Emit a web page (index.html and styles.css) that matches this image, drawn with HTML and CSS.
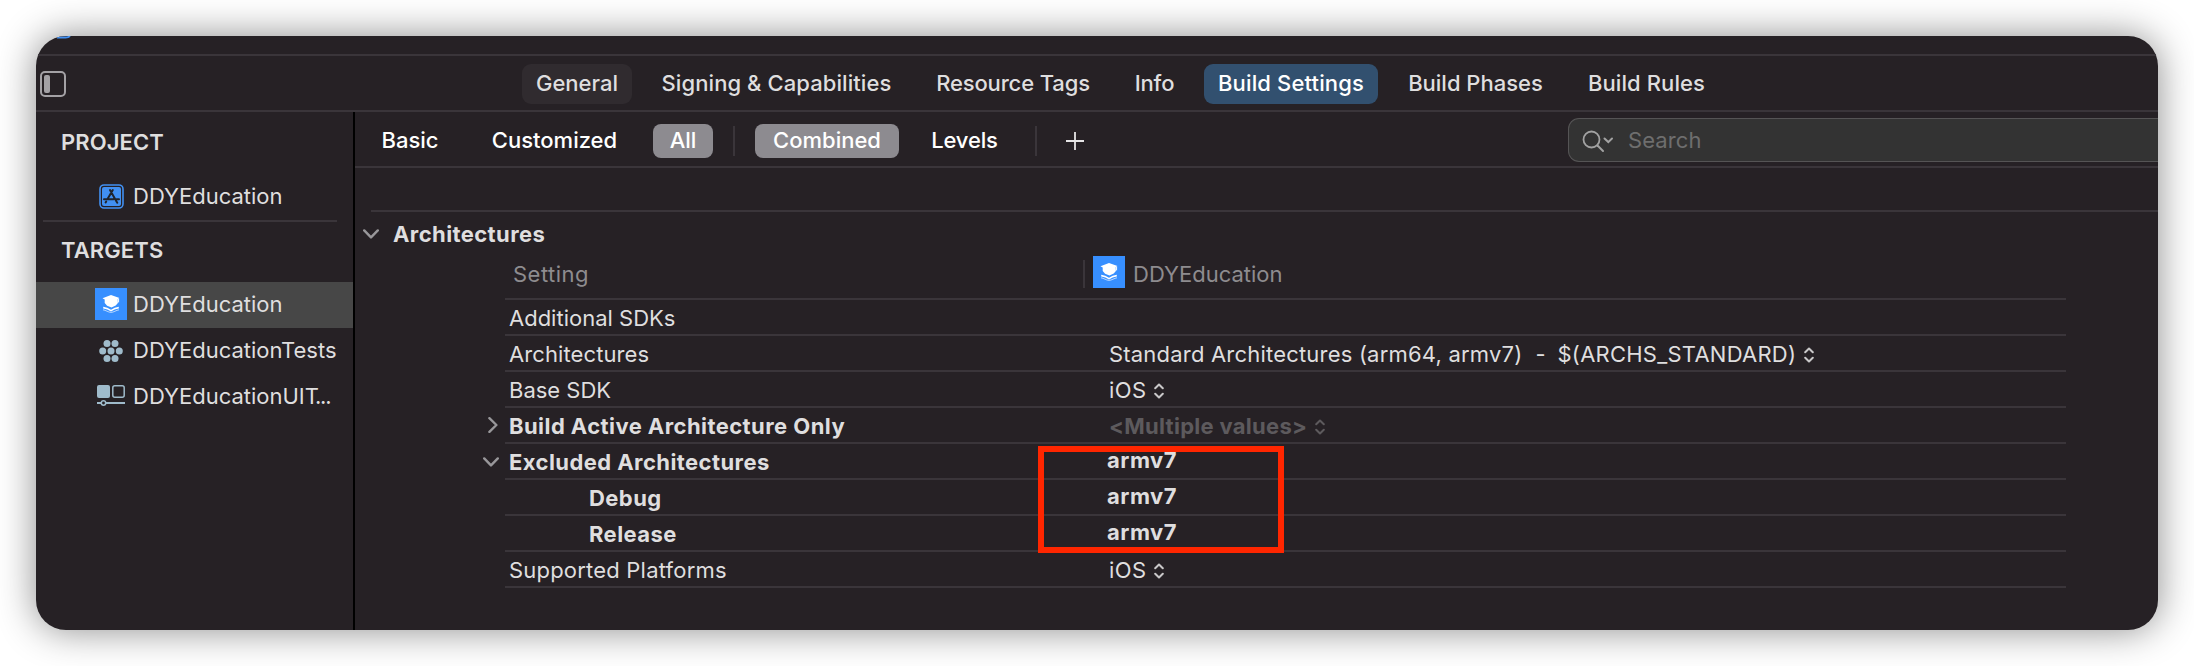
FILE: index.html
```html
<!DOCTYPE html>
<html lang="en">
<head>
<meta charset="utf-8">
<title>DDYEducation – Build Settings</title>
<link rel="stylesheet" href="styles.css">
</head>
<body>
<svg class="defs" width="0" height="0" aria-hidden="true">
  <symbol id="app" viewBox="0 0 32 32">
    <rect width="32" height="32" fill="#378fff"/>
    <path d="M7.500 10.200 16 7l8.500 3-1.800 1.200.2 3.800-2.200 2.600-4.200 1.900-4.400-1.700-2.400-2.800v-3.600z" fill="#fff"/>
    <path d="M23.600 11v3.400" stroke="#fff" stroke-width="1"/>
    <path d="M8.200 18.800q4.300.6 7.800 2.900 3.500-2.300 7.800-2.900v1.600q-4.300.6-7.800 3-3.500-2.400-7.800-3z" fill="#fff"/>
    <path d="M8 21.800c2.500.3 5.500 2.600 8 2.600s5.500-2.300 8-2.600" fill="none" stroke="#fff" stroke-width=".8" opacity=".8"/>
  </symbol>
  <symbol id="stepper" viewBox="0 0 10 16">
    <path d="M1.200 5.300 5 1.500l3.800 3.800M1.200 10.700 5 14.500l3.800-3.800" fill="none" stroke="currentColor" stroke-width="2" stroke-linecap="round" stroke-linejoin="round"/>
  </symbol>
  <symbol id="down" viewBox="0 0 16 10">
    <path d="M1.200 1.400 8 8.400l6.800-7" fill="none" stroke="#98979a" stroke-width="2.400" stroke-linecap="round" stroke-linejoin="round"/>
  </symbol>
  <symbol id="right" viewBox="0 0 10 16">
    <path d="M1.400 1.200 8.400 8l-7 6.800" fill="none" stroke="#98979a" stroke-width="2.400" stroke-linecap="round" stroke-linejoin="round"/>
  </symbol>
</svg>

<div class="window">
  <div class="strip"><svg class="clipped-icon" width="16" height="3" viewBox="0 0 16 3"><path d="M1 1.500h8.500q3 0 4.500-1.500" fill="none" stroke="#418ff0" stroke-width="2"/></svg></div>

  <header class="tabbar">
    <svg class="nav-toggle" width="26" height="26" viewBox="0 0 26 26"><rect x="1" y="1" width="24" height="24" rx="4" fill="none" stroke="#a3a1a5" stroke-width="2"/><rect x="4" y="4" width="6" height="18" rx="2" fill="#a3a1a5"/></svg>
    <nav class="tabs">
      <a class="tab tab-general">General</a>
      <a class="tab tab-signing">Signing &amp; Capabilities</a>
      <a class="tab tab-tags">Resource Tags</a>
      <a class="tab tab-info">Info</a>
      <a class="tab tab-settings">Build Settings</a>
      <a class="tab tab-phases">Build Phases</a>
      <a class="tab tab-rules">Build Rules</a>
    </nav>
  </header>

  <div class="body">
    <aside class="sidebar">
      <h2 class="group">PROJECT</h2>
      <div class="project">
        <span class="icon"><svg width="25" height="25" viewBox="0 0 25 25"><rect x="1" y="1" width="23" height="23" rx="4" fill="none" stroke="#4190f2" stroke-width="1.600"/><rect x="3" y="3" width="19" height="19" rx="2" fill="#4190f2"/><path d="M11 6l6.500 11.500M13.800 6 8.400 15.200M5 15.200h9.500M17.500 15.200H20M7.200 17.500l-.6 1M17.500 17.500l.8 1.200" fill="none" stroke="#20242c" stroke-width="2" stroke-linecap="round"/></svg></span>
        <span>DDYEducation</span>
      </div>
      <div class="rule"></div>
      <h2 class="group">TARGETS</h2>
      <ul class="targets">
        <li class="target selected"><span class="icon"><svg width="32" height="32"><use href="#app"/></svg></span><span>DDYEducation</span></li>
        <li class="target"><span class="icon"><svg width="24" height="22" viewBox="0 0 24 22" fill="#9fbbcb"><circle cx="8" cy="3.600" r="3.500"/><circle cx="16" cy="3.600" r="3.500"/><circle cx="3.700" cy="11" r="3.500"/><circle cx="12" cy="11" r="3.500"/><circle cx="20.300" cy="11" r="3.500"/><circle cx="8" cy="18.400" r="3.500"/><circle cx="16" cy="18.400" r="3.500"/></svg></span><span>DDYEducationTests</span></li>
        <li class="target"><span class="icon"><svg class="ui-icon" width="28" height="21" viewBox="0 0 28 21"><rect width="13" height="13" rx="2" fill="#9fbbcb"/><rect x="15.800" y=".8" width="11.400" height="11.400" rx="2" fill="none" stroke="#9fbbcb" stroke-width="1.500"/><path d="M0 18h4M9 18h19" stroke="#9fbbcb" stroke-width="1.800"/><circle cx="6.500" cy="18" r="2.200" fill="none" stroke="#9fbbcb" stroke-width="1.500"/></svg></span><span>DDYEducationUIT<span class="dots">...</span></span></li>
      </ul>
    </aside>

    <main class="main">
      <div class="filterbar">
        <a class="filter f-basic">Basic</a>
        <a class="filter f-custom">Customized</a>
        <a class="filter f-all on">All</a>
        <i class="sep"></i>
        <a class="filter f-combined on">Combined</a>
        <a class="filter f-levels">Levels</a>
        <i class="sep sep-end"></i>
        <svg class="plus" width="18" height="18" viewBox="0 0 18 18"><path d="M9 0v18M0 9h18" stroke="#e6e5e6" stroke-width="1.800"/></svg>
        <div class="search">
          <svg width="32" height="24" viewBox="0 0 32 24" fill="none" stroke="#a2a2a2" stroke-linecap="round"><circle cx="9.500" cy="9.500" r="8" stroke-width="1.800"/><path d="M15.500 15.500l5.500 5.500" stroke-width="2"/><path d="M22.500 8.500l3.800 3.600 3.700-3.600" stroke-width="2"/></svg>
          <span>Search</span>
        </div>
      </div>

      <section class="settings">
        <div class="section-title"><svg width="16" height="10"><use href="#down"/></svg><h3>Architectures</h3></div>
        <div class="table">
          <div class="thead"><span class="th-name">Setting</span><div class="th-target"><svg width="32" height="32"><use href="#app"/></svg><span>DDYEducation</span></div></div>
          <div class="row"><span class="name">Additional SDKs</span></div>
          <div class="row"><span class="name name-arch">Architectures</span><span class="value"><span class="standard">Standard Architectures (arm64, armv7)</span><span class="dash">-</span><span class="archs">$(ARCHS_STANDARD)</span><svg class="stepper" width="10" height="16"><use href="#stepper"/></svg></span></div>
          <div class="row"><span class="name">Base SDK</span><span class="value value-ios">iOS<svg class="stepper" width="10" height="16"><use href="#stepper"/></svg></span></div>
          <div class="row bold"><svg class="disclosure d-right" width="10" height="16"><use href="#right"/></svg><span class="name">Build Active Architecture Only</span><span class="value multiple">&lt;Multiple values&gt;<svg class="stepper" width="10" height="16"><use href="#stepper"/></svg></span></div>
          <div class="row bold"><svg class="disclosure d-down" width="16" height="10"><use href="#down"/></svg><span class="name">Excluded Architectures</span><span class="value edited">armv7</span></div>
          <div class="row bold"><span class="name child">Debug</span><span class="value edited">armv7</span></div>
          <div class="row bold"><span class="name child">Release</span><span class="value edited">armv7</span></div>
          <div class="row"><span class="name name-wide">Supported Platforms</span><span class="value value-ios">iOS<svg class="stepper" width="10" height="16"><use href="#stepper"/></svg></span></div>
          <div class="highlight"></div>
        </div>
      </section>
    </main>
  </div>
</div>
</body>
</html>
```

FILE: styles.css
```css
* { box-sizing: border-box; }

body {
  margin: 0;
  padding: 36px;
  height: 666px;
  overflow: hidden;
  background: #fff;
  color: #dfdedf;
  font: 400 22px/36px Inter, "Liberation Sans", sans-serif;
  white-space: nowrap;
}

svg { display: block; flex: none; }
.defs { position: absolute; }
h2, h3, ul { margin: 0; padding: 0; font-size: inherit; list-style: none; }

.window {
  height: 594px;
  display: flex;
  flex-direction: column;
  background: #262125;
  border-radius: 30px;
  overflow: hidden;
  box-shadow: 0 0 38px rgba(0, 0, 0, .46);
}

.strip { height: 20px; flex: none; border-bottom: 2px solid #3a353a; }
.clipped-icon { margin-left: 20px; }

/* Editor tabs */
.tabbar {
  height: 56px;
  flex: none;
  display: flex;
  align-items: flex-start;
  padding: 8px 0 0 4px;
  border-bottom: 2px solid #3a353a;
}
.nav-toggle { margin-top: 7px; }
.tabs { display: flex; gap: 16px; margin-left: 456px; font-weight: 500; }
.tab { height: 40px; line-height: 38px; border-radius: 9px; text-align: center; }
.tab-general { width: 110px; background: #302b2f; }
.tab-signing { width: 257px; letter-spacing: .08px; }
.tab-tags { width: 184px; letter-spacing: -.14px; }
.tab-info { width: 67px; letter-spacing: -.16px; }
.tab-settings { width: 174px; background: #32506f; color: #fff; letter-spacing: .14px; }
.tab-phases { width: 163px; }
.tab-rules { width: 147px; letter-spacing: .08px; }

.body { flex: 1; display: flex; min-height: 0; }

/* Project navigator */
.sidebar { width: 319px; flex: none; padding-top: 12px; border-right: 2px solid #000; }
.group { padding-left: 25px; font-weight: 600; letter-spacing: .1px; }
.project { height: 36px; display: flex; margin-top: 18px; padding-left: 59px; gap: 6px; }
.icon { width: 32px; display: flex; align-items: center; justify-content: center; }
.project .icon { height: 37px; }
.rule { height: 2px; margin: 6px 16px 10px 7px; background: #3a353a; }
.targets { margin-top: 14px; }
.target { height: 46px; padding-left: 59px; display: flex; gap: 6px; line-height: 44px; }
.target .icon { height: 44px; }
.target:nth-child(2) .icon { height: 45px; }
.selected { background: #474747; }
.ui-icon { margin-top: -1px; }
.dots { letter-spacing: -1.2px; margin-left: -4px; }

/* Filter bar */
.main { flex: 1; min-width: 0; }
.filterbar {
  height: 56px;
  display: flex;
  align-items: flex-start;
  padding: 12px 0 0 13px;
  border-bottom: 2px solid #3a353a;
  color: #fff;
  font-weight: 500;
}
.filter { height: 34px; line-height: 32px; border-radius: 8px; text-align: center; }
.on { background: #8d8b90; }
.f-basic { width: 84px; }
.f-custom { width: 151px; margin: 0 -1px 0 27px; }
.f-all { width: 60px; margin-left: 24px; }
.f-combined { width: 144px; margin-left: 20px; }
.f-levels { width: 93px; margin-left: 19px; letter-spacing: -.13px; }
.sep { width: 2px; height: 30px; margin: 2px 0 0 20px; background: #3a353a; }
.sep-end { margin-left: 24px; }
.plus { margin: 8px 0 0 29px; }
.search {
  flex: 1;
  height: 44px;
  margin: -6px 0 0 484px;
  padding: 0 0 0 13px;
  display: flex;
  gap: 14px;
  line-height: 42px;
  font-weight: 400;
  letter-spacing: .1px;
  color: #6e6e6e;
  background: #333;
  border: 1px solid #555455;
  border-right: 0;
  border-radius: 11px 0 0 11px;
}
.search svg { margin-top: 11px; }

/* Build settings table */
.settings { margin: 42px 0 0 16px; border-top: 2px solid #3a353a; }
.section-title { display: flex; align-items: center; height: 40px; margin: 2px 0 1px -8px; gap: 14px; }
.section-title h3 { font-weight: 700; letter-spacing: .41px; }
.table { position: relative; width: 1561px; margin-left: 134px; }
.thead {
  height: 45px;
  display: grid;
  grid-template-columns: 578px 1fr;
  color: #8e8c8f;
  border-bottom: 2px solid #3a353a;
}
.th-name { padding-left: 8px; line-height: 38px; letter-spacing: .48px; }
.th-target { display: flex; gap: 8px; line-height: 38px; padding-left: 10px; background: linear-gradient(#3a353a, #3a353a) 0 5px / 2px 28px no-repeat; }
.th-target svg { margin-top: 1px; }
.row {
  position: relative;
  height: 36px;
  display: grid;
  grid-template-columns: 604px 1fr;
  box-shadow: inset 0 -2px #3a353a;
}
.name { padding-left: 4px; grid-column: 1; }
.name-arch { letter-spacing: .1px; }
.name-wide { letter-spacing: .2px; }
.bold { font-weight: 700; letter-spacing: .43px; }
.child { padding-left: 84px; }
.value { display: flex; align-items: center; grid-column: 2; }
.stepper { margin: 1px 0 0 8px; color: #c9c8c9; }
.value-ios { letter-spacing: .4px; }
.standard { letter-spacing: .2px; }
.dash { margin: 0 12px 0 13px; }
.archs { letter-spacing: .24px; }
.multiple { color: #5d5a5d; letter-spacing: .29px; }
.multiple .stepper { color: #5d5a5d; }
.edited { height: 34px; line-height: 32px; align-items: flex-start; margin-left: -2px; letter-spacing: .5px; }
.disclosure { position: absolute; }
.d-right { left: -17px; top: 9px; }
.d-down { left: -22px; top: 13px; }

/* Annotation drawn over the edited values */
.highlight {
  position: absolute;
  left: 533px;
  top: 191px;
  width: 246px;
  height: 107px;
  border: 6px solid #ff2600;
}
```
